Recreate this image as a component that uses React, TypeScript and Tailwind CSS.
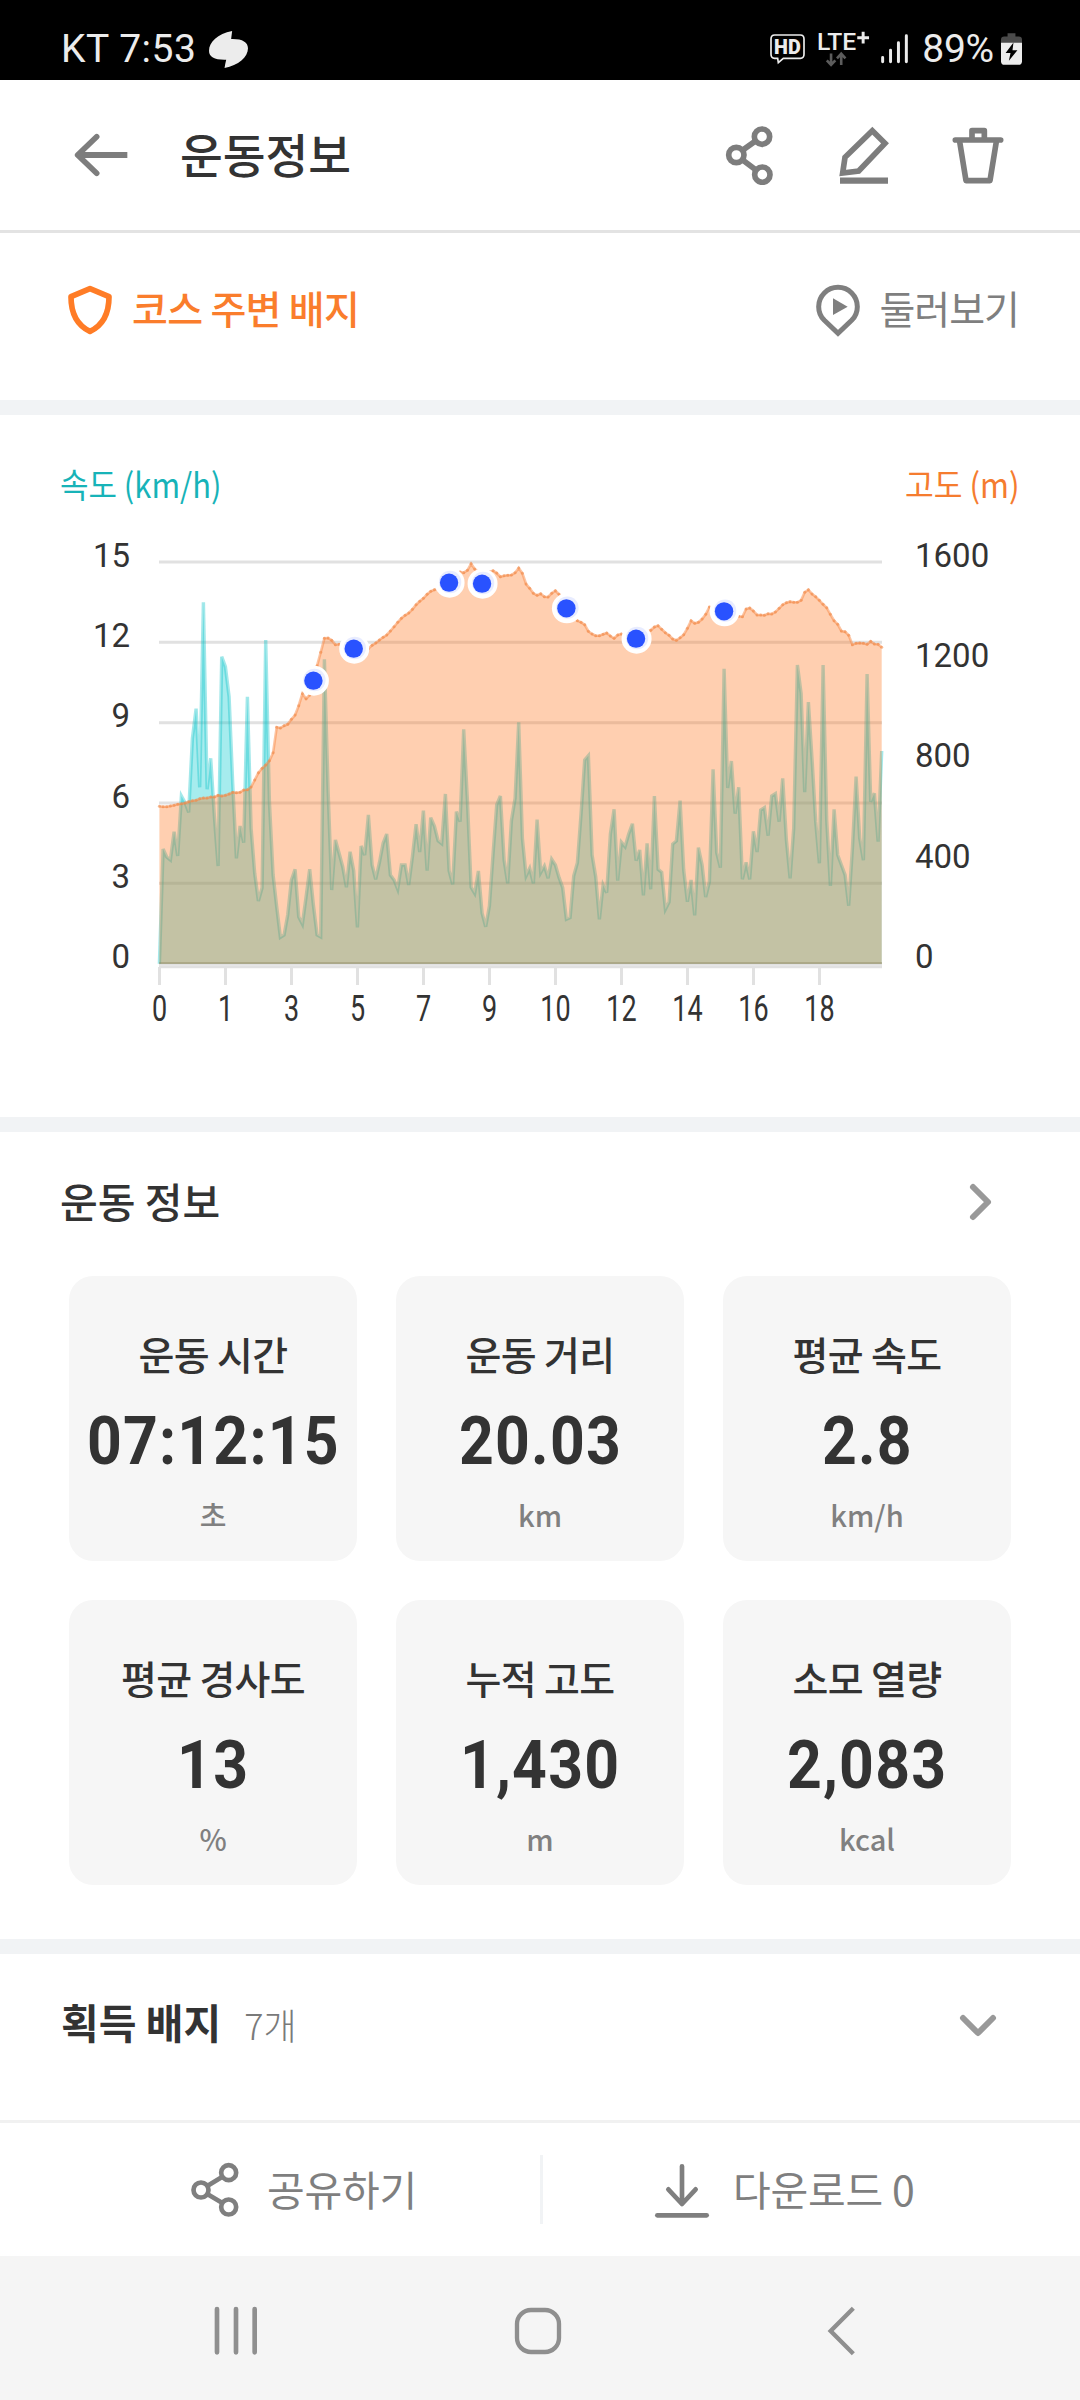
import type { ReactNode } from "react"

const SPEED = [
  1331, 987, 1011, 1020, 935, 1008, 828, 848, 877, 655, 566, 802, 247, 808, 715, 890, 1038, 410, 440, 530,
  790, 1015, 918, 968, 530, 925, 1060, 1143, 1103, 360, 845, 1065, 1160, 1252, 1245, 1185, 1080, 1048, 1190, 1212,
  1130, 1048, 1155, 1245, 1251, 418, 810, 1110, 960, 1000, 1040, 1102, 995, 1052, 1222, 978, 1005, 885, 1035, 1078,
  1028, 970, 942, 1065, 1080, 1108, 1035, 1035, 1095, 1010, 913, 996, 872, 1052, 893, 918, 962, 971, 822, 1052,
  1093, 875, 905, 628, 840, 1102, 1120, 1053, 1180, 1220, 1158, 1000, 855, 828, 1020, 1090, 902, 835, 607, 955,
  1068, 1045, 1090, 899, 1058, 1038, 1075, 1018, 1035, 1073, 1103, 1198, 1193, 1068, 1028, 880, 720, 707, 1005, 1070,
  1198, 1095, 1118, 942, 868, 1082, 967, 980, 942, 911, 1022, 990, 1126, 970, 1108, 828, 1048, 1057, 1168, 1146,
  972, 963, 842, 1050, 1145, 1080, 1186, 983, 1035, 1131, 1085, 748, 998, 1043, 446, 804, 723, 881, 802, 1078,
  1027, 1078, 934, 996, 870, 863, 947, 828, 821, 905, 775, 960, 1075, 925, 435, 520, 817, 546, 720, 905,
  1030, 435, 900, 1098, 868, 1005, 1035, 1065, 1157, 985, 770, 955, 1021, 462, 845, 820, 965, 693,
]

const ALTITUDE = [
  859, 860, 860, 858, 856, 853, 851, 849, 845, 842, 841, 836, 834, 834, 831, 831, 826, 828, 826, 822,
  817, 818, 817, 810, 809, 801, 780, 758, 745, 735, 722, 698, 622, 624, 617, 613, 598, 585, 557, 521,
  536, 525, 480, 437, 397, 355, 354, 361, 374, 373, 378, 385, 388, 390, 392, 392, 390, 386, 376, 369,
  360, 352, 345, 333, 320, 307, 295, 286, 279, 268, 254, 244, 235, 223, 214, 209, 205, 200, 190, 180,
  172, 165, 156, 158, 151, 131, 147, 155, 160, 160, 156, 152, 159, 170, 167, 166, 165, 158, 144, 160,
  192, 205, 220, 226, 221, 230, 231, 220, 212, 223, 245, 262, 280, 292, 302, 307, 314, 334, 342, 347,
  347, 343, 339, 348, 355, 345, 342, 350, 354, 356, 355, 350, 342, 336, 331, 321, 317, 328, 338, 346,
  357, 361, 353, 344, 325, 302, 310, 307, 297, 283, 261, 262, 268, 272, 275, 278, 282, 286, 289, 290,
  267, 264, 273, 285, 285, 286, 281, 282, 276, 265, 254, 248, 245, 247, 247, 241, 217, 209, 222, 230,
  241, 253, 263, 283, 302, 313, 333, 335, 346, 374, 370, 369, 370, 373, 364, 372, 373, 382,
]

// badge pins: sample index and height on the plot
const PINS = [
  [42, 482],
  [53, 386],
  [79, 188],
  [88, 191],
  [111, 265],
  [130, 356],
  [154, 274],
]

const X_LABELS = ["0", "1", "3", "5", "7", "9", "10", "12", "14", "16", "18"]
const SPEED_LABELS = ["15", "12", "9", "6", "3", "0"]
const ALTITUDE_LABELS = ["1600", "1200", "800", "400", "0"]

const STATS = [
  { label: "운동 시간", value: "07:12:15", unit: "초" },
  { label: "운동 거리", value: "20.03", unit: "km" },
  { label: "평균 속도", value: "2.8", unit: "km/h" },
  { label: "평균 경사도", value: "13", unit: "%" },
  { label: "누적 고도", value: "1,430", unit: "m" },
  { label: "소모 열량", value: "2,083", unit: "kcal" },
]

const px = (i: number) => 159.4 + (i * 11) / 3
const py = (v: number) => v / 3
const BASE = py(1331)

const toPoints = (data: number[]) => data.map((v, i) => `${px(i).toFixed(1)},${py(v).toFixed(1)}`).join(" ")
const closed = (data: number[]) => `${px(0)},${BASE} ${toPoints(data)} ${px(data.length - 1)},${BASE}`

function Icon({ children, className = "" }: { children: ReactNode; className?: string }) {
  return (
    <svg viewBox="0 0 180 180" className={`h-[60px] w-[60px] shrink-0 ${className}`} fill="none" stroke="currentColor" strokeWidth="17">
      {children}
    </svg>
  )
}

function StatusBar() {
  return (
    <div className="flex h-20 items-center bg-black pr-[58px] pl-[61px] pt-[18px] text-[#ececec]">
      <span className="font-['Roboto',sans-serif] text-[39px] leading-none tracking-[0.5px] whitespace-pre">KT 7:53</span>
      <svg viewBox="0 0 118 112" className="ml-[13px] h-[37px] w-[39px]" fill="currentColor">
        <path d="M70 0C26 8 0 34 0 60c0 20 18 28 52 27-2 9-4 17-5 25 42-8 71-33 71-60 0-19-18-29-51-28z" />
      </svg>
      <div className="ml-auto flex items-center">
        <svg viewBox="0 0 105 90" className="mr-[12px] h-[30px] w-[35px] overflow-visible">
          <path d="M14 3h77q11 0 11 12v46q0 12-11 12H40L25 86l-2-13h-9Q3 73 3 61V15Q3 3 14 3z" fill="none" stroke="currentColor" strokeWidth="5" />
          <text x="12" y="60" fontFamily="Roboto" fontWeight="900" fontSize="60" textLength="80" lengthAdjust="spacingAndGlyphs" fill="currentColor">
            HD
          </text>
        </svg>
        <svg viewBox="0 0 165 112" className="mr-[10px] h-[37px] w-[54px] overflow-visible">
          <text x="0" y="57" fontFamily="Roboto" fontWeight="500" fontSize="74" textLength="120" lengthAdjust="spacingAndGlyphs" fill="currentColor">
            LTE
          </text>
          <path d="M123 20h36M141 2v36" stroke="currentColor" strokeWidth="9" />
          <path d="M43 68v34M30 89l13 14 13-14M74 103V70M61 83l13-14 13 14" fill="none" stroke="#5c5c5c" strokeWidth="8" />
        </svg>
        <svg viewBox="0 0 82 90" className="mr-[14px] h-[30px] w-[27px]" stroke="currentColor" strokeWidth="9" strokeLinecap="round">
          <path d="M5 71v13M29 49v35M53 26v58M77 5v79" />
        </svg>
        <span className="font-['Roboto',sans-serif] text-[39px] leading-none tracking-[-0.2px]">89%</span>
        <svg viewBox="0 0 64 96" className="ml-[7px] h-[32px] w-[21px]">
          <path d="M20 0h24v10h10q10 0 10 10v10H0V20q0-10 10-10h10z" fill="#4a4a4a" />
          <path d="M0 29h64v56q0 11-11 11H11Q0 96 0 85z" fill="currentColor" />
          <path d="M38 28 14 60h15l-5 24 26-32H35z" fill="#000" />
        </svg>
      </div>
    </div>
  )
}

function Header() {
  return (
    <header className="flex h-[153px] items-center border-b-[3px] border-[#e3e3e3] pr-[72px] pl-[72px] text-[#7d7d7d]">
      <Icon>
        <path d="M17 90h149" strokeWidth="18" />
        <path d="m74 35-57 55 57 55" strokeLinecap="round" strokeLinejoin="round" />
      </Icon>
      <h1 className="mb-[3px] ml-[48px] text-[46.5px] leading-none font-medium text-[#333]">운동정보</h1>
      <div className="ml-auto flex gap-[54px]">
        <Icon>
          <circle cx="126" cy="35" r="23" />
          <circle cx="49" cy="90" r="23" />
          <circle cx="127" cy="149" r="23" />
          <path d="m67 76 41-29M67 104l41 31" />
        </Icon>
        <Icon>
          <path d="m115 17 38 38-79 83-48 6 7-47z" />
          <path d="M18 167h144" strokeWidth="19" />
        </Icon>
        <Icon>
          <path d="M22 45h136" strokeLinecap="round" />
          <path d="M72 42V17h37v25" strokeLinejoin="round" />
          <path d="m35 50 19 117h72l19-117" strokeLinejoin="round" />
        </Icon>
      </div>
    </header>
  )
}

function BadgeBar() {
  return (
    <div className="flex h-[167px] items-center justify-between pr-[61px] pb-[13px] pl-[60px]">
      <div className="flex items-center gap-[12px] text-[#fa7d2c]">
        <Icon className="text-[#ff7c26]">
          <path d="m90 26 57 24c0 50-17 85-57 104-40-19-57-54-57-104z" strokeLinejoin="round" />
        </Icon>
        <span className="mb-[5px] text-[39px] leading-none font-medium tracking-[-0.7px]">코스 주변 배지</span>
      </div>
      <div className="flex items-center gap-[11px] text-[#7f7f7f]">
        <Icon>
          <path d="M49 121a58 58 0 1 1 82 0L90 160z" strokeWidth="15" />
          <path d="m75 55 44 25-44 25z" fill="currentColor" stroke="none" />
        </Icon>
        <span className="mb-[5px] text-[39px] leading-none tracking-[-1px]">둘러보기</span>
      </div>
    </div>
  )
}

function Chart() {
  return (
    <section className="h-[702px] pt-[47px]">
      <div className="flex h-[44px] items-center justify-between px-[60px] text-[34px] leading-none">
        <span className="origin-left scale-x-[0.91] text-[#17b3b8]">속도 (km/h)</span>
        <span className="origin-right scale-x-[0.92] text-[#f57c2f]">고도 (m)</span>
      </div>
      <svg viewBox="0 0 1080 530" className="mt-[14px] h-[530px] w-full" fontFamily="Roboto, sans-serif" fill="#333">
        <g stroke="#e1e1e1" strokeWidth="3">
          {SPEED_LABELS.map((label, i) => (
            <path key={label} d={`M159 ${42 + i * 80.33}H882`} />
          ))}
          <path d="M159 446.8H882" />
          {X_LABELS.map((label, i) => (
            <path key={label} d={`M${159.5 + i * 66} 447V465`} />
          ))}
        </g>
        <polygon points={closed(SPEED)} fill="#00c8cd" fillOpacity=".35" />
        <polyline points={toPoints(SPEED)} fill="none" stroke="#00c0c5" strokeOpacity=".36" strokeWidth="3.4" />
        <polygon points={closed(ALTITUDE)} fill="#ff6f12" fillOpacity=".335" />
        <polyline points={toPoints(ALTITUDE)} fill="none" stroke="#f98a45" strokeOpacity=".5" strokeWidth="2.6" />
        <g fill="#f08a4a" fillOpacity=".6">
          {ALTITUDE.map((v, i) => (
            <circle key={i} cx={px(i)} cy={py(v)} r="1.5" />
          ))}
        </g>
        <path d={`M159 ${BASE - 0.5}H882`} stroke="#8a8050" strokeOpacity=".35" strokeWidth="1.6" />
        {PINS.map(([i, v]) => (
          <g key={i}>
            <circle cx={px(i) + 0.5} cy={py(v)} r="15" fill="#fff" />
            <circle cx={px(i) + 1} cy={py(v) - 0.7} r="11.2" fill="#e8ecff" />
            <circle cx={px(i)} cy={py(v)} r="9.2" fill="#2952ff" />
          </g>
        ))}
        <g fontSize="33">
          {SPEED_LABELS.map((label, i) => (
            <text key={label} x="130" y={46.7 + i * 80.33} textAnchor="end">
              {label}
            </text>
          ))}
          {ALTITUDE_LABELS.map((label, i) => (
            <text key={label} x="915" y={46.5 + i * 100.4}>
              {label}
            </text>
          ))}
        </g>
        <g fontSize="36" textAnchor="middle">
          {X_LABELS.map((label, i) => (
            <text key={label} transform={`translate(${159.5 + i * 66} 501) scale(.75 1)`}>
              {label}
            </text>
          ))}
        </g>
      </svg>
    </section>
  )
}

function StatCard({ label, value, unit }: { label: string; value: string; unit: string }) {
  return (
    <div className="flex h-[285px] flex-col items-center rounded-[24px] bg-[#f6f6f6] pt-[57px] text-[#333]">
      <span className="text-[39px] leading-[40px] font-medium tracking-[-0.7px]">{label}</span>
      <span className="mt-[36px] scale-x-[0.92] pl-px font-['Roboto',sans-serif] text-[66px] leading-[66px] font-bold tracking-[1.3px]">{value}</span>
      <span className="mt-[19px] text-[29px] leading-[40px] font-medium text-[#808080]">{unit}</span>
    </div>
  )
}

function Stats() {
  return (
    <section className="h-[807px]">
      <div className="flex h-[144px] items-center justify-between pr-[84px] pb-[5px] pl-[60px]">
        <h2 className="mb-[3px] text-[41px] leading-none font-medium text-[#333]">운동 정보</h2>
        <svg viewBox="0 0 28 42" className="h-[42px] w-[28px]" fill="none" stroke="#999" strokeWidth="6" strokeLinecap="round" strokeLinejoin="round">
          <path d="m5 6 15 15L5 36" />
        </svg>
      </div>
      <div className="grid grid-cols-3 gap-[39px] px-[69px]">
        {STATS.map((stat) => (
          <StatCard key={stat.label} {...stat} />
        ))}
      </div>
    </section>
  )
}

function EarnedBadges() {
  return (
    <section className="flex h-[166px] items-center pr-[81px] pb-[26px] pl-[61px]">
      <h2 className="mb-[5px] text-[41px] leading-none font-bold text-[#333]">획득 배지</h2>
      <span className="ml-[23px] text-[36px] leading-none font-light text-[#7a7a7a]">7개</span>
      <svg viewBox="0 0 42 28" className="mt-[3px] ml-auto h-[28px] w-[42px]" fill="none" stroke="#999" strokeWidth="6" strokeLinecap="round" strokeLinejoin="round">
        <path d="m6 6 15 15L36 6" />
      </svg>
    </section>
  )
}

function Actions() {
  return (
    <div className="flex h-[136px] items-center border-t-[3px] border-[#f1f1f1] text-[#7f7f7f]">
      <button className="flex h-[69px] w-[540px] items-center pl-[185px]">
        <Icon>
          <circle cx="131" cy="38" r="22.5" strokeWidth="14" />
          <circle cx="48" cy="90" r="22.5" strokeWidth="14" />
          <circle cx="131" cy="141" r="22.5" strokeWidth="14" />
          <path d="m68 77 43-26M68 103l43 25" strokeWidth="14" />
        </Icon>
        <span className="mb-[2px] ml-[22px] text-[41px] leading-none tracking-[-0.2px]">공유하기</span>
      </button>
      <button className="flex h-[69px] flex-1 items-center border-l-[3px] border-[#f1f3f5] pl-[109px]">
        <Icon>
          <g strokeWidth="14" strokeLinecap="round" strokeLinejoin="round">
            <path d="M90 19v113M49 88l41 44 41-44" />
            <path d="M16 166h148" />
          </g>
        </Icon>
        <span className="mb-[2px] ml-[21px] text-[41px] leading-none tracking-[-0.2px]">다운로드 0</span>
      </button>
    </div>
  )
}

function NavBar() {
  return (
    <nav className="flex h-36 items-center bg-[#f5f5f5] pt-[5px] pl-[206px] text-[#8f8f8f]">
      <Icon>
        <path d="M33 24v130M90 24v130M146 24v130" strokeWidth="14" strokeLinecap="round" />
      </Icon>
      <Icon className="ml-[242px]">
        <rect x="27" y="27" width="126" height="126" rx="42" strokeWidth="13" />
      </Icon>
      <Icon className="ml-[240px]">
        <path d="m136 22-68 68 68 68" strokeWidth="13" />
      </Icon>
    </nav>
  )
}

function Band() {
  return <div className="h-[15px] bg-[#f1f3f5]" />
}

export default function App() {
  return (
    <div className="h-[2400px] w-[1080px] overflow-hidden bg-white font-['Noto_Sans_CJK_KR',sans-serif]">
      <StatusBar />
      <Header />
      <BadgeBar />
      <Band />
      <Chart />
      <Band />
      <Stats />
      <Band />
      <EarnedBadges />
      <Actions />
      <NavBar />
    </div>
  )
}
